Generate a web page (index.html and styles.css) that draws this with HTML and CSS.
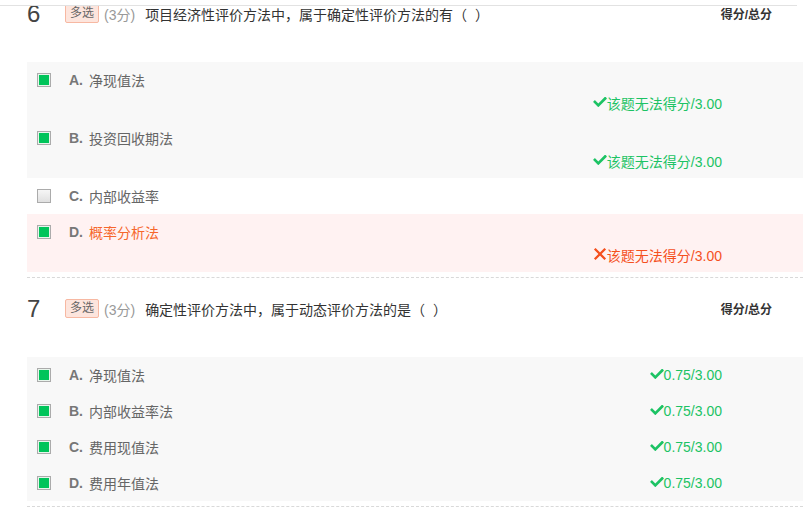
FILE: index.html
```html
<!DOCTYPE html>
<html lang="zh-CN">
<head>
<meta charset="utf-8">
<title>作业详情</title>
<link rel="stylesheet" href="styles.css">
</head>
<body>
<div class="topbar"></div>
<div class="quiz">
  <div class="question">
    <div class="q-head">
      <span class="q-num">6</span>
      <span class="q-type">多选</span>
      <span class="q-score">(3分)</span>
      <span class="q-title">项目经济性评价方法中，属于确定性评价方法的有（&nbsp;&nbsp;）</span>
      <span class="q-total">得分/总分</span>
    </div>
    <div class="options">
      <div class="opt right stacked">
        <div class="opt-line"><span class="cb on"></span><span class="opt-key">A.</span><span class="opt-text">净现值法</span></div>
        <div class="opt-result ok"><svg class="ico-ok" viewBox="0 72 512 376"><path d="M173.9 439.4l-166.4-166.4c-10-10-10-26.2 0-36.2l36.2-36.2c10-10 26.2-10 36.2 0L192 312.7 432.1 72.6c10-10 26.2-10 36.2 0l36.2 36.2c10 10 10 26.2 0 36.2l-294.4 294.4c-10 10-26.2 10-36.2 0z"/></svg>该题无法得分/3.00</div>
      </div>
      <div class="opt right stacked">
        <div class="opt-line"><span class="cb on"></span><span class="opt-key">B.</span><span class="opt-text">投资回收期法</span></div>
        <div class="opt-result ok"><svg class="ico-ok" viewBox="0 72 512 376"><path d="M173.9 439.4l-166.4-166.4c-10-10-10-26.2 0-36.2l36.2-36.2c10-10 26.2-10 36.2 0L192 312.7 432.1 72.6c10-10 26.2-10 36.2 0l36.2 36.2c10 10 10 26.2 0 36.2l-294.4 294.4c-10 10-26.2 10-36.2 0z"/></svg>该题无法得分/3.00</div>
      </div>
      <div class="opt">
        <div class="opt-line"><span class="cb"></span><span class="opt-key">C.</span><span class="opt-text">内部收益率</span></div>
      </div>
      <div class="opt wrong stacked">
        <div class="opt-line"><span class="cb on"></span><span class="opt-key">D.</span><span class="opt-text">概率分析法</span></div>
        <div class="opt-result bad"><svg class="ico-bad" viewBox="0 0 16 16"><path d="M2 2L14 14M14 2L2 14"/></svg>该题无法得分/3.00</div>
      </div>
    </div>
  </div>

  <div class="question">
    <div class="q-head">
      <span class="q-num">7</span>
      <span class="q-type">多选</span>
      <span class="q-score">(3分)</span>
      <span class="q-title">确定性评价方法中，属于动态评价方法的是（&nbsp;&nbsp;）</span>
      <span class="q-total">得分/总分</span>
    </div>
    <div class="options">
      <div class="opt right inline">
        <div class="opt-line"><span class="cb on"></span><span class="opt-key">A.</span><span class="opt-text">净现值法</span></div>
        <div class="opt-result ok"><svg class="ico-ok" viewBox="0 72 512 376"><path d="M173.9 439.4l-166.4-166.4c-10-10-10-26.2 0-36.2l36.2-36.2c10-10 26.2-10 36.2 0L192 312.7 432.1 72.6c10-10 26.2-10 36.2 0l36.2 36.2c10 10 10 26.2 0 36.2l-294.4 294.4c-10 10-26.2 10-36.2 0z"/></svg>0.75/3.00</div>
      </div>
      <div class="opt right inline">
        <div class="opt-line"><span class="cb on"></span><span class="opt-key">B.</span><span class="opt-text">内部收益率法</span></div>
        <div class="opt-result ok"><svg class="ico-ok" viewBox="0 72 512 376"><path d="M173.9 439.4l-166.4-166.4c-10-10-10-26.2 0-36.2l36.2-36.2c10-10 26.2-10 36.2 0L192 312.7 432.1 72.6c10-10 26.2-10 36.2 0l36.2 36.2c10 10 10 26.2 0 36.2l-294.4 294.4c-10 10-26.2 10-36.2 0z"/></svg>0.75/3.00</div>
      </div>
      <div class="opt right inline">
        <div class="opt-line"><span class="cb on"></span><span class="opt-key">C.</span><span class="opt-text">费用现值法</span></div>
        <div class="opt-result ok"><svg class="ico-ok" viewBox="0 72 512 376"><path d="M173.9 439.4l-166.4-166.4c-10-10-10-26.2 0-36.2l36.2-36.2c10-10 26.2-10 36.2 0L192 312.7 432.1 72.6c10-10 26.2-10 36.2 0l36.2 36.2c10 10 10 26.2 0 36.2l-294.4 294.4c-10 10-26.2 10-36.2 0z"/></svg>0.75/3.00</div>
      </div>
      <div class="opt right inline">
        <div class="opt-line"><span class="cb on"></span><span class="opt-key">D.</span><span class="opt-text">费用年值法</span></div>
        <div class="opt-result ok"><svg class="ico-ok" viewBox="0 72 512 376"><path d="M173.9 439.4l-166.4-166.4c-10-10-10-26.2 0-36.2l36.2-36.2c10-10 26.2-10 36.2 0L192 312.7 432.1 72.6c10-10 26.2-10 36.2 0l36.2 36.2c10 10 10 26.2 0 36.2l-294.4 294.4c-10 10-26.2 10-36.2 0z"/></svg>0.75/3.00</div>
      </div>
    </div>
  </div>
</div>
</body>
</html>
```

FILE: styles.css
```css
html, body {
  margin: 0;
  padding: 0;
  background: #fff;
  overflow: hidden;
}
body {
  font-family: "Liberation Sans", "Noto Sans CJK SC", sans-serif;
  font-size: 14px;
  color: #333;
  position: relative;
  width: 803px;
  height: 508px;
}
.topbar {
  position: absolute;
  top: 0;
  left: 0;
  width: 797px;
  height: 5px;
  background: #fff;
  border-bottom: 1px solid #e2e2e2;
  z-index: 5;
}
.quiz {
  margin-top: -17px;
  padding-left: 27px;
}
.question {
  padding-top: 21px;
  border-bottom: 1px dashed #d9d9d9;
}
.q-head {
  display: flex;
  align-items: center;
  height: 19px;
  padding-right: 31px;
}
.q-num {
  width: 38px;
  font-size: 24px;
  line-height: 19px;
  color: #444;
}
.q-type {
  box-sizing: border-box;
  width: 34px;
  height: 19px;
  line-height: 17px;
  text-align: center;
  font-size: 12px;
  color: #666;
  background: #fde5dd;
  border: 1px solid #f7b8a2;
  border-radius: 2px;
}
.q-score {
  margin-left: 5px;
  color: #999;
  font-size: 14px;
}
.q-title {
  margin-left: 10px;
  font-size: 14px;
  color: #333;
}
.q-total {
  margin-left: auto;
  font-size: 12px;
  font-weight: bold;
  color: #333;
}
.options {
  margin-top: 39px;
  margin-bottom: 5px;
}
.opt {
  padding: 8px 81px 8px 10px;
}
.opt.right {
  background: #f8f8f8;
}
.opt.wrong {
  background: #fff2f2;
}
.opt.stacked {
  padding-bottom: 7px;
}
.opt.inline {
  display: flex;
  align-items: center;
  justify-content: space-between;
}
.opt-line {
  display: flex;
  align-items: center;
  height: 20px;
}
.cb {
  box-sizing: border-box;
  width: 14px;
  height: 14px;
  border: 1px solid #ababab;
  background: linear-gradient(#f6f6f6, #e0e0e0);
}
.cb.on {
  background: #00c45a;
  box-shadow: inset 0 0 0 1px #e8f5ec;
}
.opt-key {
  margin-left: 18px;
  width: 20px;
  font-weight: bold;
  color: #777;
}
.opt-text {
  color: #666;
}
.wrong .opt-text {
  color: #f6672c;
}
.opt-result {
  display: flex;
  align-items: center;
  justify-content: flex-end;
  height: 20px;
  font-size: 14px;
}
.stacked .opt-result {
  margin-top: 3px;
}
.opt-result.ok {
  color: #1cc364;
}
.opt-result.bad {
  color: #f5501e;
}
.ico-ok {
  width: 14px;
  height: 10px;
  fill: #1cc364;
  margin-top: -3px;
}
.ico-bad {
  width: 14px;
  height: 14px;
  fill: none;
  stroke: #f5501e;
  stroke-width: 2.6;
  margin-top: -2px;
}
```
